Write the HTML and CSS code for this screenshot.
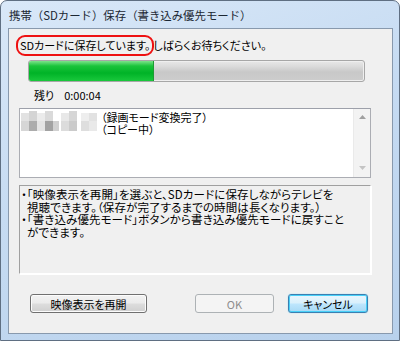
FILE: index.html
```html
<!DOCTYPE html>
<html lang="ja">
<head>
    <meta charset="UTF-8">
    <title>携帯（SDカード）保存（書き込み優先モード）</title>
    <link rel="stylesheet" href="styles.css">
</head>
<body>
    <div class="window">
        <div class="titlebar">携帯（SDカード）保存（書き込み優先モード）</div>
        <div class="client">
            <div class="status">
                <span class="mark">SDカードに保存しています。</span>しばらくお待ちください。
            </div>

            <div class="progress">
                <div class="progress-fill" style="width: 37%"></div>
            </div>

            <div class="remain">
                <span>残り</span>
                <span class="time">0:00:04</span>
            </div>

            <div class="listbox">
                <div class="list-items">
                    <div class="list-row">
                        <svg class="mosaic" width="76" height="24" viewBox="0 0 76 24">
                            <rect x="0" y="2" width="8" height="8" fill="#e2e2e2"/>
                            <rect x="8" y="0" width="8" height="10" fill="#d4d4d4"/>
                            <rect x="16" y="2" width="8" height="8" fill="#ebebeb"/>
                            <rect x="24" y="0" width="8" height="10" fill="#dadada"/>
                            <rect x="40" y="2" width="8" height="8" fill="#e8e8e8"/>
                            <rect x="48" y="0" width="8" height="10" fill="#d6d6d6"/>
                            <rect x="60" y="2" width="8" height="8" fill="#eeeeee"/>
                            <rect x="68" y="2" width="8" height="8" fill="#e2e2e2"/>
                            <rect x="0" y="10" width="8" height="10" fill="#d6d6d6"/>
                            <rect x="8" y="10" width="8" height="10" fill="#acacac"/>
                            <rect x="16" y="10" width="8" height="10" fill="#e4e4e4"/>
                            <rect x="24" y="10" width="8" height="10" fill="#a2a2a2"/>
                            <rect x="32" y="10" width="6" height="10" fill="#d0d0d0"/>
                            <rect x="40" y="10" width="8" height="10" fill="#dcdcdc"/>
                            <rect x="48" y="10" width="8" height="10" fill="#cbcbcb"/>
                            <rect x="60" y="10" width="8" height="10" fill="#dedede"/>
                            <rect x="68" y="10" width="8" height="10" fill="#e9e9e9"/>
                        </svg>
                        <div class="list-text">
                            <div>（録画モード変換完了）</div>
                            <div>（コピー中）</div>
                        </div>
                    </div>
                </div>
                <div class="scrollbar">
                    <svg width="7" height="4" viewBox="0 0 7 4"><path d="M0 4 L3.5 0 L7 4 Z" fill="#a0a0a0"/></svg>
                    <svg width="7" height="4" viewBox="0 0 7 4"><path d="M0 0 L3.5 4 L7 0 Z" fill="#c4c4c4"/></svg>
                </div>
            </div>

            <div class="info">
                <div>・「映像表示を再開」を選ぶと、SDカードに保存しながらテレビを</div>
                <div class="indent">視聴できます。（保存が完了するまでの時間は長くなります。）</div>
                <div>・「書き込み優先モード」ボタンから書き込み優先モードに戻すこと</div>
                <div class="indent">ができます。</div>
            </div>

            <div class="buttons">
                <button class="btn btn-resume">映像表示を再開</button>
                <div class="right-buttons">
                    <button class="btn btn-ok" disabled>OK</button>
                    <button class="btn btn-cancel">キャンセル</button>
                </div>
            </div>
        </div>
    </div>
</body>
</html>
```

FILE: styles.css
```css
body {
    margin: 0;
    width: 400px;
    height: 341px;
    overflow: hidden;
    background: #ffffff;
    font-family: "Noto Sans CJK JP", "Noto Sans", sans-serif;
    font-size: 11px;
    color: #000;
    font-feature-settings: "palt";
}
.window {
    box-sizing: border-box;
    width: 400px;
    height: 341px;
    border: 1px solid #5f6f82;
    border-radius: 7px 7px 0 0;
    background: linear-gradient(160deg, #d9e8f8 0%, #c6dbf2 45%, #b8d1ec 100%);
    display: flex;
    flex-direction: column;
    padding: 0 6px 6px 7px;
}
.titlebar {
    height: 27px;
    line-height: 28px;
    padding-left: 1px;
    color: #1b2733;
    font-size: 11.4px;
    font-feature-settings: normal;
    white-space: nowrap;
}
.client {
    box-sizing: border-box;
    width: 385px;
    flex: 1;
    border: 1px solid #8899ad;
    background: #f0f0f0;
    display: flex;
    flex-direction: column;
    padding: 0 0 0 10px;
}
.status {
    height: 26px;
    line-height: 32px;
    white-space: nowrap;
}
.mark {
    display: inline-block;
    line-height: 15px;
    margin-left: -3px;
    padding: 1px 2px 1px 2px;
    border: 2px solid #ee1111;
    border-radius: 9px;
    margin-right: -1px;
}
.progress {
    box-sizing: border-box;
    width: 337px;
    height: 22px;
    margin: 5px 0 0 9px;
    border: 1px solid #a7a7a7;
    border-radius: 3px;
    background: linear-gradient(#e8e8e8 0%, #d9d9d9 30%, #c8c8c8 55%, #cdcdcd 100%);
    box-shadow: inset 0 0 0 1px #efefef;
    overflow: hidden;
}
.progress-fill {
    height: 100%;
    background: linear-gradient(#7de38b 0%, #19c43a 25%, #00b327 60%, #19c83c 100%);
    border-right: 1px solid #1d9c33;
}
.remain {
    display: flex;
    gap: 10px;
    height: 26px;
    line-height: 26px;
    padding-left: 15px;
}
.listbox {
    box-sizing: border-box;
    width: 352px;
    height: 70px;
    border: 1px solid #abadb3;
    border-top-color: #9da0aa;
    background: #fff;
    display: flex;
}
.list-items {
    flex: 1;
    padding: 2px 0 0 1px;
}
.list-row {
    display: flex;
    gap: 4px;
}
.mosaic {
    flex-shrink: 0;
}
.list-text {
    line-height: 12px;
}
.scrollbar {
    width: 16px;
    background: #f3f3f3;
    border-left: 1px solid #eaeaea;
    display: flex;
    flex-direction: column;
    justify-content: space-between;
    align-items: center;
    padding: 6px 0 7px;
}
.info {
    box-sizing: border-box;
    width: 352px;
    height: 89px;
    margin-top: 7px;
    border: 1px solid;
    border-color: #a0a0a0 #ffffff #ffffff #a0a0a0;
    box-shadow: 1px 1px 0 #fff;
    padding: 2px 0 0 1px;
    font-size: 11.5px;
    letter-spacing: 0.1px;
    line-height: 12.5px;
    white-space: nowrap;
}
.indent {
    padding-left: 6px;
}
.buttons {
    width: 349px;
    display: flex;
    justify-content: space-between;
    margin-top: 20px;
    padding-left: 11px;
    box-sizing: border-box;
}
.right-buttons {
    display: flex;
    gap: 14px;
}
.btn {
    box-sizing: border-box;
    height: 19px;
    padding: 0;
    font-family: inherit;
    font-size: 11px;
    font-feature-settings: "palt";
    border: 1px solid #707070;
    border-radius: 3px;
    background: linear-gradient(#f2f2f2 0%, #ebebeb 48%, #dddddd 52%, #cfcfcf 100%);
    color: #000;
    box-shadow: inset 0 0 0 1px #fcfcfc;
}
.btn-resume {
    width: 117px;
}
.btn-ok {
    width: 79px;
    border-color: #adb2b5;
    background: #f4f4f4;
    color: #8d8d8d;
    box-shadow: none;
}
.btn-cancel {
    width: 80px;
    border-color: #3c7fb1;
    background: linear-gradient(#eaf6fd 0%, #d9f0fc 48%, #bee6fd 52%, #a7d9f5 100%);
    box-shadow: inset 0 0 0 1px #48d0f8, 0 0 1px #48d0f8;
}
```
